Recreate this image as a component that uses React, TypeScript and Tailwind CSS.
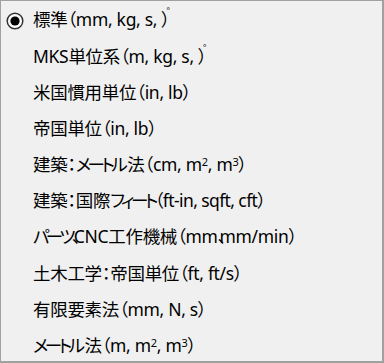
import React from "react";

const Sup = ({ children }: { children: React.ReactNode }) => (
  <span className="align-[0.45em] text-[11px] leading-none">{children}</span>
);

const K = ({ children }: { children: React.ReactNode }) => (
  <span className="tracking-[-3.5px]">{children}</span>
);

const Comma = () => <span className="tracking-[-7px]">、</span>;

const Odd = () => (
  <span className="relative">
    ）<span className="absolute left-[5px] top-[0px] text-[8px] leading-none">°</span>
  </span>
);

const items: React.ReactNode[] = [
  <>標準（mm, kg, s, <Odd /></>,
  <>MKS単位系（m, kg, s, <Odd /></>,
  <>米国慣用単位（in, lb）</>,
  <>帝国単位（in, lb）</>,
  <>建築：<K>メートル</K><span className="pl-[3px]">法</span>（cm, m<Sup>2</Sup>, m<Sup>3</Sup>）</>,
  <>建築：国際<K>フィート</K><span className="tracking-[-0.6px]">（ft-in, sqft, cft）</span></>,
  <><K>パーツ</K><Comma />CNC工作機械（mm<Comma />mm/min）</>,
  <>土木工学：帝国単位（ft, ft/s）</>,
  <>有限要素法（mm, N, s）</>,
  <><K>メートル</K><span className="pl-[3px]">法</span>（m, m<Sup>2</Sup>, m<Sup>3</Sup>）</>,
];

export default function App() {
  return (
    <div className="w-[384px] h-[363px] bg-[#a0a0a0] p-px pr-[2px] pb-[2px]">
      <div
        className="h-full w-full bg-[#f0f0f0] text-black text-[17.5px] pt-px"
        style={{ fontFamily: '"Noto Sans", "Noto Sans CJK JP", sans-serif', fontFeatureSettings: '"palt"' }}
      >
        {items.map((it, i) => (
          <div key={i} className="flex items-center h-[36.2px]">
            <div className="w-[32px] flex justify-center pr-[4px] pt-[2px]">
              {i === 0 && (
                <svg width="18" height="18" viewBox="0 0 18 18">
                  <circle cx="9" cy="9" r="7.8" fill="#fafafa" stroke="#333" strokeWidth="1.5" />
                  <circle cx="9" cy="9" r="4.6" fill="#000" />
                </svg>
              )}
            </div>
            <div className="whitespace-nowrap leading-none tracking-[-0.3px]">{it}</div>
          </div>
        ))}
      </div>
    </div>
  );
}
